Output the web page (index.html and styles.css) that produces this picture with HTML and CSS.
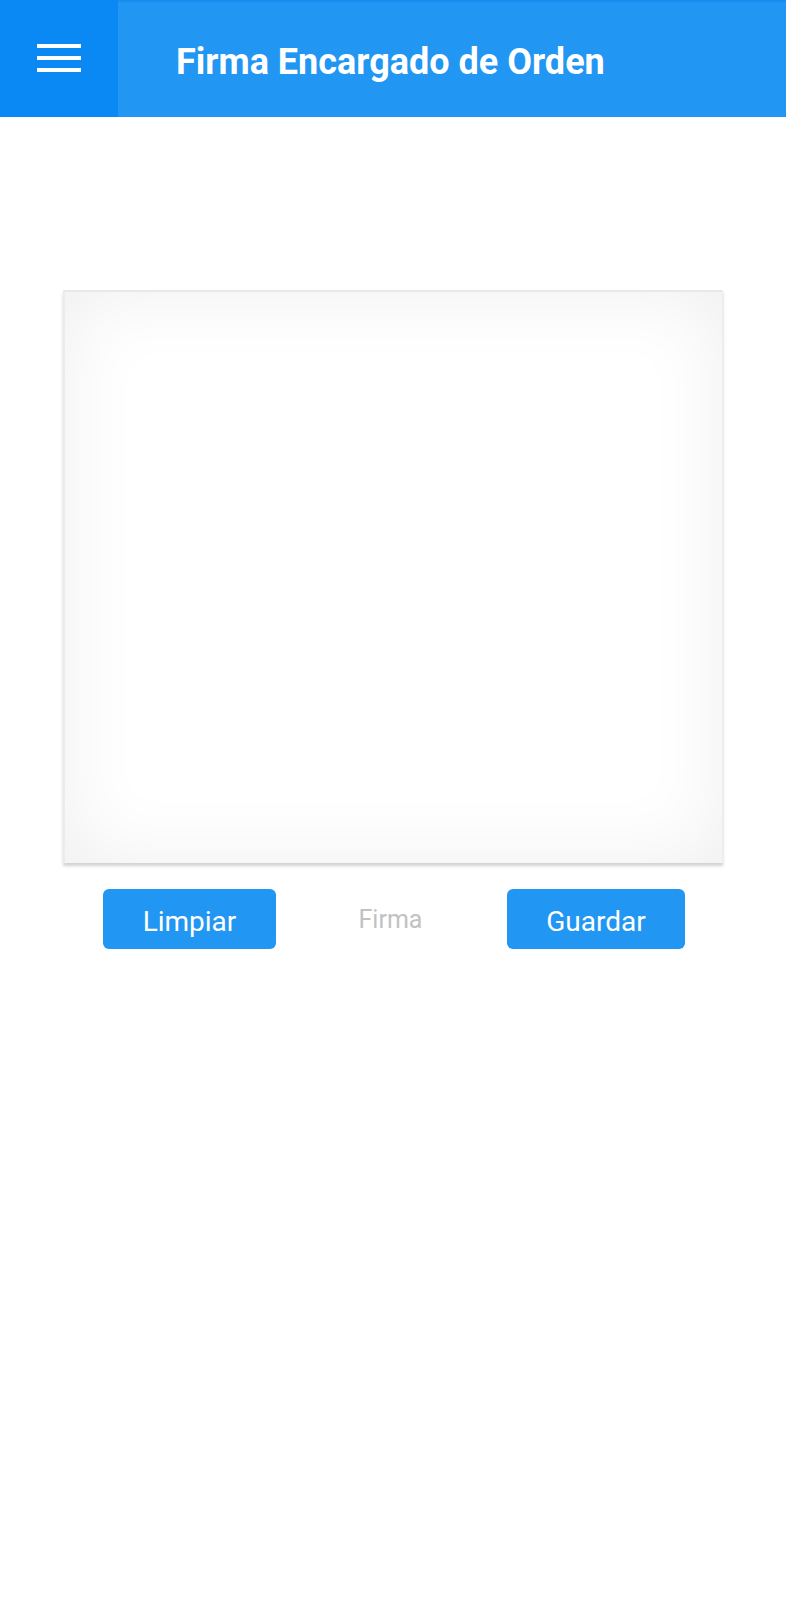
FILE: index.html
```html
<!DOCTYPE html>
<html lang="es">
<head>
<meta charset="utf-8">
<title>Firma Encargado de Orden</title>
<link rel="stylesheet" href="styles.css">
</head>
<body>
<header class="appbar">
  <div class="menu-btn">
    <svg width="44" height="28" viewBox="0 0 44 28" aria-hidden="true">
      <rect x="0" y="0" width="44" height="4" fill="#fff"/>
      <rect x="0" y="12" width="44" height="4" fill="#fff"/>
      <rect x="0" y="24" width="44" height="4" fill="#fff"/>
    </svg>
  </div>
  <h1 class="title">Firma Encargado de Orden</h1>
</header>
<main class="content">
  <div class="pad"></div>
  <div class="actions">
    <button class="btn btn-clear">Limpiar</button>
    <span class="label">Firma</span>
    <button class="btn btn-save">Guardar</button>
  </div>
</main>
</body>
</html>
```
FILE: styles.css
```css
html, body {
  margin: 0;
  padding: 0;
  background: #ffffff;
  font-family: Roboto, "Liberation Sans", Arial, sans-serif;
}

.appbar {
  display: flex;
  align-items: stretch;
  height: 117px;
  background: #2196F3;
  box-sizing: border-box;
  border-top: 2px solid #178DF2;
}

.menu-btn {
  width: 118px;
  background: #0A89F5;
  display: flex;
  align-items: center;
  padding-left: 37px;
  box-sizing: border-box;
  margin-top: -2px;
  padding-bottom: 2px;
}

.title {
  margin: 0 0 0 58px;
  align-self: center;
  color: #ffffff;
  font-weight: 700;
  font-size: 36px;
  letter-spacing: 0;
  padding-top: 4px;
}

.content {
  padding: 173px 0 0 63px;
}

.pad {
  width: 660px;
  height: 573px;
  box-sizing: border-box;
  background: #ffffff;
  border-top: 2px solid #e8e8e8;
  border-left: 2px solid #ececec;
  border-right: 1px solid #eeeeee;
  box-shadow: inset 0 0 80px rgba(0, 0, 0, 0.065), 0 3px 3px rgba(0, 0, 0, 0.18);
}

.actions {
  width: 660px;
  box-sizing: border-box;
  padding: 0 38px 0 40px;
  margin-top: 26px;
  display: flex;
  align-items: center;
  justify-content: space-between;
}

.btn {
  height: 60px;
  padding: 5px 0 0;
  border: none;
  border-radius: 6px;
  background: #2196F3;
  color: #ffffff;
  font-family: Roboto, "Liberation Sans", Arial, sans-serif;
  font-size: 28px;
  font-weight: 400;
}

.btn-clear {
  width: 173px;
}

.btn-save {
  width: 178px;
}

.label {
  color: #c2c2c2;
  font-size: 25px;
  padding-top: 1px;
  margin-right: 2px;
}
```
